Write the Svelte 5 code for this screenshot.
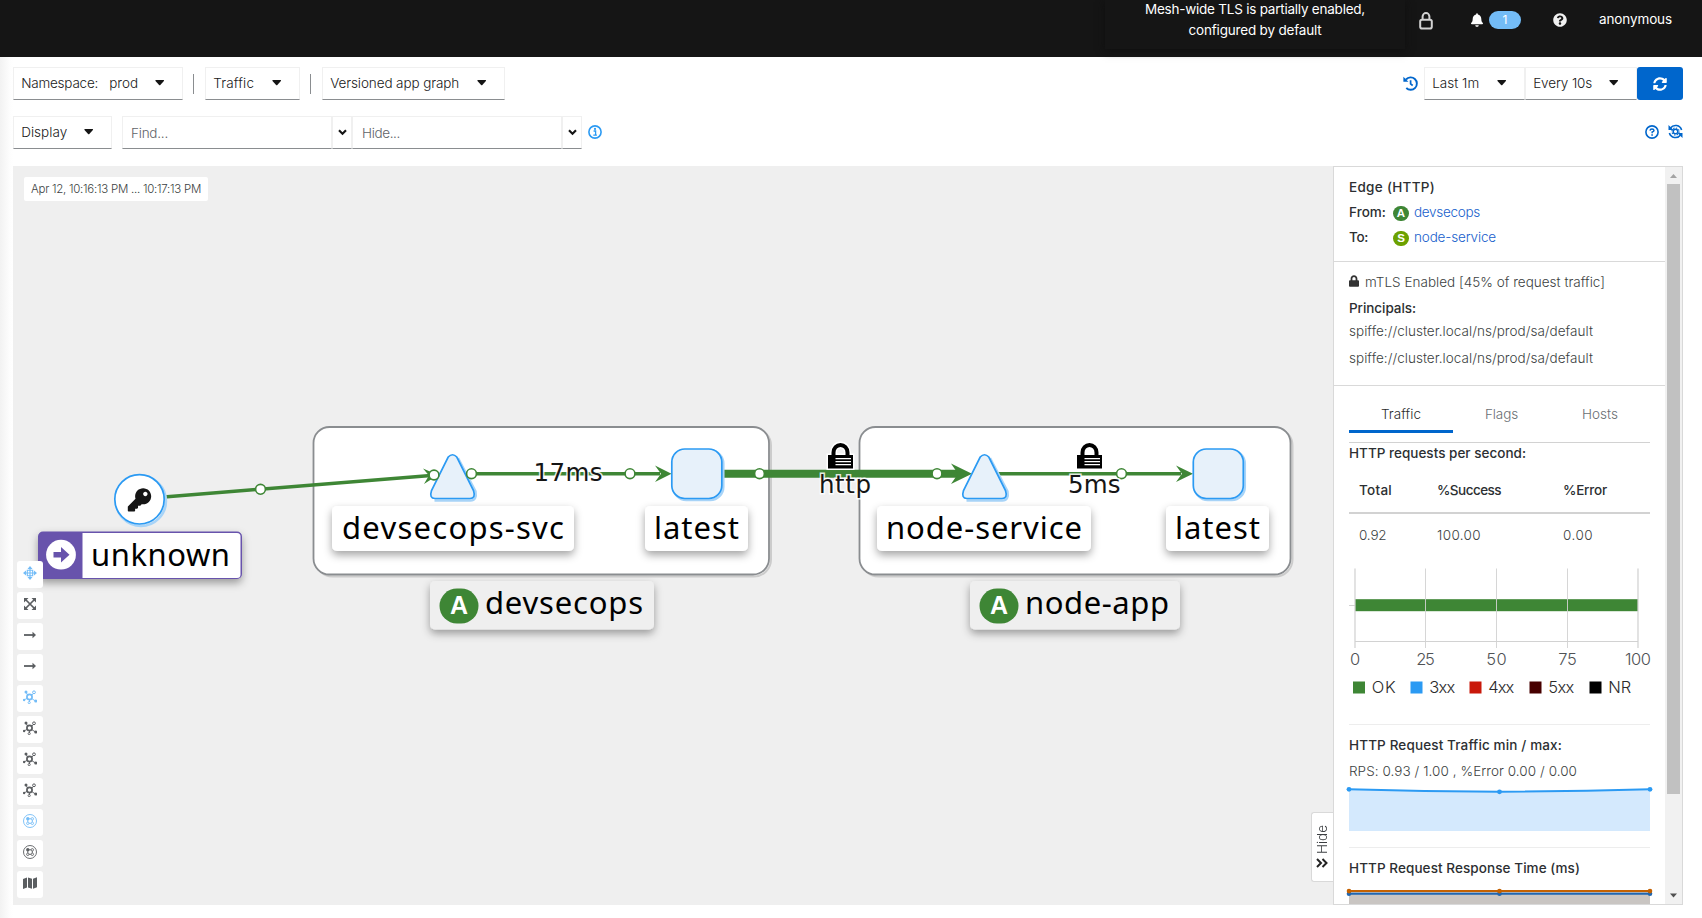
<script>
  const ICONS = {
    key: 'M512 176.001C512 273.203 433.202 352 336 352c-11.22 0-22.19-1.062-32.827-3.069l-24.012 27.014A23.999 23.999 0 0 1 261.223 384H224v40c0 13.255-10.745 24-24 24h-40v40c0 13.255-10.745 24-24 24H24c-13.255 0-24-10.745-24-24v-78.059c0-6.365 2.529-12.47 7.029-16.971l161.802-161.802C163.108 213.814 160 195.271 160 176 160 78.798 238.797.001 335.999 0 433.488-.001 512 78.511 512 176.001zM336 128c0 26.51 21.49 48 48 48s48-21.49 48-48-21.49-48-48-48-48 21.49-48 48z',
    lock: 'M400 224h-24v-72C376 68.2 307.8 0 224 0S72 68.2 72 152v72H48c-26.5 0-48 21.5-48 48v192c0 26.5 21.5 48 48 48h352c26.5 0 48-21.5 48-48V272c0-26.5-21.5-48-48-48zm-104 0H152v-72c0-39.7 32.3-72 72-72s72 32.3 72 72v72z',
    bell: 'M224 512c35.32 0 63.97-28.65 63.97-64H160.03c0 35.35 28.65 64 63.97 64zm215.39-149.71c-19.32-20.76-55.47-51.99-55.47-154.29 0-77.7-54.48-139.9-127.94-155.16V32c0-17.67-14.32-32-31.98-32s-31.98 14.33-31.98 32v20.84C118.56 68.1 64.08 130.3 64.08 208c0 102.3-36.15 133.53-55.47 154.29-6 6.45-8.66 14.16-8.61 21.71.11 16.4 12.98 32 32.1 32h383.8c19.12 0 32-15.6 32.1-32 .05-7.55-2.61-15.27-8.61-21.71z',
    question: 'M504 256c0 136.997-111.043 248-248 248S8 392.997 8 256C8 119.083 119.043 8 256 8s248 111.083 248 248zM262.655 90c-54.497 0-89.255 22.957-116.549 63.758-3.536 5.286-2.353 12.415 2.715 16.258l34.699 26.31c5.205 3.947 12.621 3.008 16.665-2.122 17.864-22.658 30.113-35.797 57.303-35.797 20.429 0 45.698 13.148 45.698 32.958 0 14.976-12.363 22.667-32.534 33.976C247.128 238.528 216 254.941 216 296v4c0 6.627 5.373 12 12 12h56c6.627 0 12-5.373 12-12v-1.333c0-28.462 83.186-29.647 83.186-106.667 0-58.002-60.165-102-116.531-102zM256 338c-25.365 0-46 20.635-46 46 0 25.364 20.635 46 46 46s46-20.636 46-46c0-25.365-20.635-46-46-46z',
    sync: 'M370.72 133.28C339.458 104.008 298.888 87.962 255.848 88c-77.458.068-144.328 53.178-162.791 126.85-1.344 5.363-6.122 9.15-11.651 9.15H24.103c-7.498 0-13.194-6.807-11.807-14.176C33.933 94.924 134.813 8 256 8c66.448 0 126.791 26.136 171.315 68.685L463.03 40.97C478.149 25.851 504 36.559 504 57.941V192c0 13.255-10.745 24-24 24H345.941c-21.382 0-32.09-25.851-16.971-40.971l41.75-41.749zM32 296h134.059c21.382 0 32.09 25.851 16.971 40.971l-41.75 41.75c31.262 29.273 71.835 45.319 114.876 45.28 77.418-.07 144.315-53.144 162.787-126.849 1.344-5.363 6.122-9.15 11.651-9.15h57.304c7.498 0 13.194 6.807 11.807 14.176C478.067 417.076 377.187 504 256 504c-66.448 0-126.791-26.136-171.315-68.685L48.97 471.03C33.851 486.149 8 475.441 8 454.059V320c0-13.255 10.745-24 24-24z'
  };

  const tools = [
    ['move', true], ['fit', false], ['arrow', false], ['arrow', false],
    ['layout', true], ['layout', false], ['layout', false], ['layout', false],
    ['ns', true], ['ns', false], ['map', false]
  ];

  const legend = [
    ['OK', '#3e8635', 1353, 24], ['3xx', '#2b9af3', 1410.5, 26], ['4xx', '#c9190b', 1469.5, 26],
    ['5xx', '#470000', 1529.5, 26], ['NR', '#000', 1589.5, 23]
  ];
  const ticks = [[0, 1355, 10], [25, 1425.5, 18.5], [50, 1496.5, 20.5], [75, 1567.5, 18.5], [100, 1638, 26]];

  const groups = [{ x: 313.5, w: 455.5 }, { x: 859.5, w: 431 }];
  const triangles = [452.5, 984.5];
  const squares = [671.8, 1193.3];
  const labels = [
    { t: 'devsecops-svc', x: 332, w: 242, tw: 222 },
    { t: 'latest', x: 645, w: 103, tw: 85 },
    { t: 'node-service', x: 877, w: 214, tw: 196 },
    { t: 'latest', x: 1166, w: 103, tw: 85 }
  ];
  const apps = [
    { t: 'devsecops', x: 430, w: 224, tw: 158 },
    { t: 'node-app', x: 970, w: 210, tw: 144 }
  ];
  const dots = [[260.5, 489.3], [434, 475], [471.5, 473.7], [630, 473.7], [759.5, 473.7], [937, 473.7], [1121.5, 473.7]];

  // Spreads the letters of a label over a fixed measure.
  function measure(node, width) {
    const natural = node.getBoundingClientRect().width;
    node.style.letterSpacing = (width - natural) / node.textContent.length + 'px';
  }
</script>

{#snippet caret()}
  <svg class="caret" width="10" height="6" viewBox="0 0 10 6"><path d="M.8 0h7.800q.8.200.3.900L5.300 5q-.6.500-1.200 0L.5.900Q.1.200.8 0z" fill="#151515" /></svg>
{/snippet}

{#snippet chevron()}
  <svg width="9" height="7" viewBox="0 0 9 7"><path d="M1 1.200 4.500 4.800 8 1.200" fill="none" stroke="#151515" stroke-width="2.100" /></svg>
{/snippet}

{#snippet padlock(x)}
  <g transform="translate({x} 443)" stroke="#fff" stroke-width="4" paint-order="stroke">
    <path d="M0 12h3.500V9.500a9 9.500 0 0 1 18 0V12H25v13.500H0z M7.500 12h10V9.500a5 5.500 0 0 0-10 0z" fill="#000" fill-rule="evenodd" stroke-width="3" />
    <path d="M7.500 15.700H23M7.500 18.700H23M7.500 21.700H23" stroke="#fff" stroke-width="1.300" />
  </g>
{/snippet}

<div class="page">
  <header>
    <div class="tls">
      <span use:measure={220}>Mesh-wide TLS is partially enabled,</span>
      <span use:measure={133}>configured by default</span>
    </div>
    <svg class="h-lock" width="14" height="18" viewBox="0 0 14 18"><rect x="1.200" y="7.700" width="11.600" height="8.800" rx="1.800" fill="none" stroke="#d2d2d2" stroke-width="2" /><path d="M3.600 7V4.500a3.400 3.400 0 0 1 6.800 0V7" fill="none" stroke="#d2d2d2" stroke-width="2" /></svg>
    <svg class="h-bell" width="12" height="14" viewBox="0 0 448 512"><path d={ICONS.bell} fill="#fff" /></svg>
    <span class="count">1</span>
    <svg class="h-help" width="14" height="14" viewBox="0 0 512 512"><path d={ICONS.question} fill="#f0f0f0" /></svg>
    <span class="user"><span use:measure={73}>anonymous</span></span>
  </header>

  <div class="body">
    <div class="edge"></div>
    <main>
      <div class="bar">
        <button class="dd" style:width="170px"><span use:measure={77}>Namespace:</span><span class="prod" use:measure={29}>prod</span>{@render caret()}</button>
        <i class="sep"></i>
        <button class="dd" style:width="95px"><span use:measure={41}>Traffic</span>{@render caret()}</button>
        <i class="sep"></i>
        <button class="dd" style:width="183px"><span use:measure={129}>Versioned app graph</span>{@render caret()}</button>
        <span class="grow"></span>
        <svg class="hist" width="15" height="15" viewBox="0 0 15 15" fill="none" stroke="#06c"><path d="M3 3.500A6.200 6.200 0 1 1 3.300 12" stroke-width="1.900" /><path d="M.4.800v5h5z" fill="#06c" stroke="none" /><path d="M7.600 4.200v3.600l2.100 1.700" stroke-width="1.700" /></svg>
        <button class="dd" style:width="101px"><span use:measure={47}>Last 1m</span>{@render caret()}</button>
        <button class="dd" style:width="112px"><span use:measure={59}>Every 10s</span>{@render caret()}</button>
        <button class="refresh" aria-label="Refresh"><svg width="14" height="14" viewBox="0 0 512 512"><path d={ICONS.sync} fill="#fff" /></svg></button>
      </div>
      <div class="bar second">
        <button class="dd" style:width="99px"><span use:measure={46}>Display</span>{@render caret()}</button>
        <div class="field first"><span use:measure={37}>Find...</span></div>
        <div class="pick">{@render chevron()}</div>
        <div class="field hidef"><span use:measure={38}>Hide...</span></div>
        <div class="pick">{@render chevron()}</div>
        <svg class="info" width="14" height="14" viewBox="0 0 14 14"><circle cx="7" cy="7" r="6.100" fill="none" stroke="#2b9af3" stroke-width="1.600" /><path d="M5.600 6h2v4M5.300 10.200h3.600" fill="none" stroke="#2b9af3" stroke-width="1.300" /><circle cx="7" cy="3.900" r="1.100" fill="#2b9af3" /></svg>
        <span class="grow"></span>
        <svg class="up" width="14" height="14" viewBox="0 0 14 14" fill="none" stroke="#06c"><circle cx="7" cy="7" r="6.100" stroke-width="1.600" /><path d="M5 5.600Q5.200 4 7 4t2 1.500Q9 6.500 7.200 7v1.200" stroke-width="1.500" /><path d="M6.300 9.200h1.600v1.500H6.300z" fill="#06c" stroke="none" /></svg>
        <svg class="reset" width="15" height="15" viewBox="0 0 15 15" fill="none" stroke="#06c"><path d="M2.500 4A6.300 6.300 0 0 1 13.600 6M12.500 11A6.300 6.300 0 0 1 1.400 9" stroke-width="1.600" /><path d="M.5 1v5h5zM14.500 14V9h-5z" fill="#06c" stroke="none" /><circle cx="7.500" cy="7.500" r="2.300" stroke-width="1.500" /><circle cx="7.500" cy="7.500" r="3.600" stroke-width="1.100" stroke-dasharray="1.400 1.430" /></svg>
      </div>

      <div class="work">
        <div class="graph">
          <svg class="canvas" width="1320" height="739" viewBox="13 166 1320 739">
            <defs>
              <filter id="drop" x="-20%" y="-40%" width="140%" height="200%"><feDropShadow dx="0" dy="4" stdDeviation="4" flood-color="#000" flood-opacity=".36" /></filter>
            </defs>
            {#each groups as g}
              <rect x={g.x + 2} y="428.500" width={g.w} height="148" rx="17" fill="none" stroke="#ccc" stroke-width="2" />
              <rect x={g.x} y="427" width={g.w} height="147.500" rx="16" fill="#fff" stroke="#8a8d90" stroke-width="1.800" />
            {/each}

            <g stroke="#3e8635" fill="#3e8635">
              <path d="M164 497 434 475.200" stroke-width="3.500" />
              <path d="M471 473.800H660M996 473.800H1181" stroke-width="3.500" />
              <path d="M722 473.800H958" stroke-width="8" />
              <g stroke="none">
                <path d="M671.500 473.700 655 465.500 661 473.700 655 482z" />
                <path d="M1193 473.700 1176 465.500 1182 473.700 1176 482z" />
                <path d="M972 473.700 951 463.500 958 473.700 951 484z" />
                <path d="M438 475 423 468.500 429 475.600 424 484z" />
              </g>
            </g>

            <circle cx="141" cy="501" r="25" fill="none" stroke="#a8d4f8" stroke-width="2.500" />
            <circle cx="139.500" cy="499.300" r="24.700" fill="#fff" stroke="#2b9af3" stroke-width="1.700" />
            <path transform="translate(127.800 488.200) scale(.0457)" d={ICONS.key} fill="#151515" />

            {#each triangles as x}
              <g transform="translate({x} 0)">
                <path d="M5.500 458 23 491.500Q24.500 500.500 18 500.500H-18" fill="none" stroke="#a8d4f8" stroke-width="2.500" />
                <path d="M-4.300 457Q0 452.500 4.300 457L21 490.500Q23.500 498.500 17.500 498.500H-17.500Q-23.500 498.500 -21 490.500Z" fill="#e7f1fa" stroke="#2b9af3" stroke-width="1.700" />
              </g>
            {/each}
            {#each squares as x}
              <rect x={x + 1.500} y="450.500" width="50" height="49.500" rx="13" fill="none" stroke="#a8d4f8" stroke-width="2.500" />
              <rect {x} y="449" width="50" height="49.500" rx="13" fill="#e7f1fa" stroke="#2b9af3" stroke-width="1.700" />
            {/each}

            {#each labels as l}
              <rect x={l.x} y="506" width={l.w} height="45" rx="5" fill="#fff" filter="url(#drop)" />
              <text class="name" x={l.x + l.w / 2} y="538.500" text-anchor="middle" textLength={l.tw}>{l.t}</text>
            {/each}

            {#each apps as a}
              <rect x={a.x} y="581" width={a.w} height="48.500" rx="5" fill="#efefef" filter="url(#drop)" />
              <rect x={a.x + 9.500} y="588.500" width="39" height="35" rx="17.500" fill="#3e8635" />
              <text class="letter" x={a.x + 29} y="613.700" text-anchor="middle">A</text>
              <text class="name" x={a.x + 55} y="613.500" textLength={a.tw}>{a.t}</text>
            {/each}

            <g>
              <rect x="38" y="531.500" width="204" height="47.500" rx="5" fill="#6753ac" filter="url(#drop)" />
              <path d="M82.500 533H237q3.500 0 3.500 3.500v38q0 3.500-3.500 3.500H82.500z" fill="#fff" />
              <circle cx="61" cy="554.700" r="14.900" fill="#fff" />
              <path d="M53.500 552h7.500v-5l8.500 7.700-8.500 7.700v-5h-7.500z" fill="#6753ac" />
              <text class="name" x="91" y="565.500" textLength="139">unknown</text>
            </g>

            {#each dots as d}
              <circle cx={d[0]} cy={d[1]} r="4.900" fill="#fff" stroke="#3e8635" stroke-width="1.600" />
            {/each}
            <g class="metric">
              <text x="533.500" y="480.500" textLength="69">17ms</text>
              <text x="819" y="492.800" textLength="52">http</text>
              <text x="1068" y="492.800" textLength="52.500">5ms</text>
            </g>
            {@render padlock(828)}
            {@render padlock(1077)}
          </svg>

          <div class="time"><span use:measure={170}>Apr 12, 10:16:13 PM ... 10:17:13 PM</span></div>

          <div class="tools">
            {#each tools as [kind, on]}
              <div class="tool" class:on>
                <svg width="14" height="14" viewBox="0 0 14 14" fill="none" stroke="currentColor" stroke-width="1.200">
                  {#if kind === 'move'}
                    <path d="M7 0 9.500 3h-5zM7 14l2.500-3h-5zM0 7l3-2.500v5zM14 7l-3-2.500v5z" fill="currentColor" stroke="none" />
                    <path d="M4.300 4.300h5.400v5.400H4.300zM7 3v8M3 7h8" stroke-width="1.100" />
                  {:else if kind === 'fit'}
                    <path d="M2.500 2.500l9 9M11.500 2.500l-9 9" stroke-width="1.700" />
                    <path d="M1 1h4.500L1 5.500zM13 1v4.500L8.500 1zM1 13V8.500L5.500 13zM13 13H8.500L13 8.500z" fill="currentColor" stroke="none" />
                  {:else if kind === 'arrow'}
                    <path d="M1 7h9.500" stroke-width="1.800" /><path d="M9.500 3.800 13 7 9.500 10.200z" fill="currentColor" stroke="none" />
                  {:else if kind === 'layout'}
                    <circle cx="6.500" cy="7" r="2.600" stroke-width="1.700" />
                    <path d="M4.800 5.200 3 2.500M8.500 5.500l2-2.200M4.200 8.300 1 10M8.600 8.500l3.600 2.300M6.500 9.500V12" stroke-width=".9" />
                    <circle cx="11" cy="2.300" r="1.400" stroke-width="1" /><circle cx="6.200" cy="12.600" r="1.100" stroke-width=".9" />
                    <g fill="currentColor" stroke="none"><circle cx="3" cy="2" r="1.500" /><circle cx="1.100" cy="10" r="1.200" /><circle cx="12.700" cy="11" r="1.500" /></g>
                  {:else if kind === 'ns'}
                    <circle cx="7" cy="7" r="6.500" stroke-width=".9" />
                    <circle cx="4.800" cy="4.800" r="1.700" fill="currentColor" stroke="none" />
                    <g stroke-width=".9"><circle cx="9.300" cy="4.800" r="1.200" /><circle cx="4.800" cy="9.300" r="1.200" /><circle cx="9.300" cy="9.300" r="1.200" /><path d="M6 4.800h2M4.800 6v2M9.300 6v2M6 9.300h2" /></g>
                  {:else}
                    <path d="M0 3 4 1.500v10L0 13zM5 1.500l4 1.300v10L5 11.500zM10 2.800 14 1.300v10l-4 1.500z" fill="currentColor" stroke="none" />
                  {/if}
                </svg>
              </div>
            {/each}
          </div>

          <div class="hide"><svg width="12" height="10" viewBox="0 0 12 10"><path d="M1 1l4 4-4 4M6.500 1l4 4-4 4" fill="none" stroke="#222" stroke-width="2" /></svg><span>Hide</span></div>
        </div>

        <aside>
          <div class="content">
            <section class="who">
              <div class="strong title"><span use:measure={86}>Edge (HTTP)</span></div>
              <div class="end from"><b use:measure={37}>From:</b><i class="badge">A</i><a href="#a" use:measure={66}>devsecops</a></div>
              <div class="end"><b use:measure={19}>To:</b><i class="badge svc">S</i><a href="#s" use:measure={82}>node-service</a></div>
            </section>
            <section class="mtls">
              <div><svg width="10" height="12" viewBox="0 0 448 512"><path d={ICONS.lock} fill="#333" /></svg><span use:measure={240}>mTLS Enabled [45% of request traffic]</span></div>
              <div class="strong"><span use:measure={67}>Principals:</span></div>
              <div class="p1"><span use:measure={244}>spiffe://cluster.local/ns/prod/sa/default</span></div>
              <div class="p2"><span use:measure={244}>spiffe://cluster.local/ns/prod/sa/default</span></div>
            </section>
            <section class="stats">
              <nav><span class="on"><em use:measure={40}>Traffic</em></span><span><em use:measure={33}>Flags</em></span><span><em use:measure={36}>Hosts</em></span></nav>
              <hr />
              <div class="strong h1"><span use:measure={177}>HTTP requests per second:</span></div>
              <div class="row head"><span><em use:measure={33}>Total</em></span><span><em use:measure={64}>%Success</em></span><span><em use:measure={44}>%Error</em></span></div>
              <div class="row"><span><em use:measure={27.500}>0.92</em></span><span><em use:measure={44}>100.00</em></span><span><em use:measure={30}>0.00</em></span></div>
              <svg class="chart" width="316" height="168" viewBox="1349 556 316 168">
                <path d="M1349 605.500h6" stroke="#d2d2d2" />
                <rect x="1355" y="599.200" width="283" height="12" fill="#3e8635" />
                <path d="M1355 641.500h283" stroke="#d2d2d2" />
                {#each ticks as [v, x, w], i}
                  <path d="M{x} 568.500V648" stroke="#d2d2d2" stroke-opacity={i % 4 ? .9 : .7} stroke-width={i % 4 ? 1 : 1.800} />
                  <text {x} y="665.300" text-anchor="middle" textLength={w} fill="#4f5255">{v}</text>
                {/each}
                {#each legend as [name, color, x, w]}
                  <rect {x} y="681.500" width="12" height="12" fill={color} />
                  <text x={x + 18.800} y="692.500" textLength={w} fill="#2b2b2b">{name}</text>
                {/each}
              </svg>
              <div class="strong block"><span use:measure={213}>HTTP Request Traffic min / max:</span></div>
              <div class="rps"><span use:measure={228}>RPS: 0.93 / 1.00 , %Error 0.00 / 0.00</span></div>
              <svg class="spark" width="307" height="63" viewBox="1346 784 307 63">
                <path d="M1349 789.300Q1499.500 794 1650 789.300V831H1349z" fill="#d4e9fd" />
                <path d="M1349 789.300Q1499.500 794 1650 789.300" fill="none" stroke="#2b9af3" stroke-width="2" />
                <g fill="#2b9af3"><circle cx="1349" cy="789.300" r="2.400" /><circle cx="1499.500" cy="791.800" r="2.400" /><circle cx="1650" cy="789.300" r="2.400" /></g>
              </svg>
              <div class="strong block"><span use:measure={231}>HTTP Request Response Time (ms)</span></div>
              <svg class="spark last" width="307" height="19" viewBox="1346 885 307 19">
                <path d="M1349 892h301v12h-301z" fill="#c9c5c2" />
                <path d="M1349 893.800h301" stroke="#2066b0" stroke-width="2" />
                <g fill="#2066b0"><circle cx="1349" cy="893.800" r="2.300" /><circle cx="1499.500" cy="893.800" r="2.300" /><circle cx="1650" cy="893.800" r="2.300" /></g>
                <path d="M1349 890.900h301" stroke="#c46100" stroke-width="2" />
                <g fill="#c46100"><circle cx="1349" cy="891.100" r="2.300" /><circle cx="1499.500" cy="891.100" r="2.300" /><circle cx="1650" cy="891.100" r="2.300" /></g>
              </svg>
            </section>
          </div>
          <div class="scroll">
            <svg width="17" height="17" viewBox="0 0 17 17"><path d="M5 11l3.500-4L12 11z" fill="#a3a3a3" /></svg>
            <div class="thumb"></div>
            <svg width="17" height="17" viewBox="0 0 17 17"><path d="M5 6.500h7L8.500 10.500z" fill="#505050" /></svg>
          </div>
        </aside>
      </div>
    </main>
  </div>
</div>

<style>
  :global(body) { margin: 0; background: #fff; overflow: hidden; }
  .page { width: 1702px; height: 918px; overflow: hidden; font: 300 13.5px/20px Inter, sans-serif; color: #3c3f42; white-space: nowrap; display: flex; flex-direction: column; }
  .page * { box-sizing: border-box; }
  svg { display: block; flex: none; }
  header { height: 57px; background: #151515; color: #fff; display: flex; align-items: flex-start; justify-content: flex-end; flex: none; font-weight: 400; }
  .tls { width: 300px; height: 49px; box-shadow: 0 2px 8px #0f0f0f; display: flex; flex-direction: column; align-items: center; line-height: 21px; margin-right: 14px; }
  .tls span:first-child { margin-top: -1px; }
  .h-lock { margin-top: 12px; }
  .h-bell { margin: 13px 0 0 38px; }
  .count { width: 32px; height: 18px; margin: 11px 0 0 6px; border-radius: 9px; background: #73bcf7; text-align: center; line-height: 18px; font-size: 12px; }
  .h-help { margin: 13px 32px 0 32px; }
  .user { width: 103px; margin-top: 9px; }
  .body { display: flex; flex: 1; }
  .edge { width: 13px; background: linear-gradient(90deg, #f2f2f2, #fdfdfd 75%, #fff); }
  main { width: 1670px; display: flex; flex-direction: column; }
  .bar { display: flex; align-items: center; height: 33px; margin-top: 10px; flex: none; }
  .second { margin-top: 16px; }
  button { font: inherit; font-weight: 350; color: #202020; }
  .dd { height: 33px; padding: 0 17px 1px 7.200px; background: #fff; border: 1px solid #f0f0f0; border-bottom-color: #8a8d90; display: flex; align-items: center; text-align: left; flex: none; }
  .dd .prod { margin-left: 11px; }
  .caret { margin-left: auto; }
  .sep { width: 1px; height: 20px; background: #8a8d90; margin: 0 11px 0 10px; }
  .grow { flex: 1; }
  .hist { margin: 0 6px 1px 0; }
  .refresh { width: 46px; height: 33px; background: #06c; border: 0; border-radius: 3px; padding: 0; display: grid; place-items: center; }
  .field, .pick { height: 33px; border: 1px solid #f0f0f0; border-bottom-color: #8a8d90; display: flex; align-items: center; }
  .field { width: 210px; padding: 0 0 0 8px; color: #5f6368; font-weight: 350; }
  .hidef { padding-left: 9px; }
  .first { margin-left: 10px; }
  .pick { width: 20px; justify-content: center; padding-bottom: 1px; }
  .info { margin: 0 0 2px 6px; }
  .up { margin-bottom: 2px; }
  .reset { margin: 0 0 2px 9px; }
  .work { display: flex; height: 739px; margin-top: 17px; }
  .graph { width: 1320px; position: relative; background: #efefef; }
  .canvas { position: absolute; inset: 0; }
  .name { font: 400 31px "Noto Sans", sans-serif; fill: #000; }
  .letter { font: 700 25px "Liberation Sans", sans-serif; fill: #fff; }
  .metric { font: 400 24.500px "DejaVu Sans", sans-serif; fill: #151515; stroke: #fff; stroke-opacity: .85; stroke-width: 3px; paint-order: stroke; }
  .time { position: absolute; left: 11px; top: 11px; width: 184px; height: 24px; padding-left: 7px; border-radius: 2px; background: #fff; font-size: 11.500px; line-height: 24px; font-weight: 350; }
  .tools { position: absolute; left: 4px; top: 395px; display: flex; flex-direction: column; gap: 4px; }
  .tool { width: 26px; height: 27px; border-radius: 3px; background: #fff; display: grid; place-items: center; color: #5b5e61; padding-bottom: 3px; }
  .tool.on { color: #73bcf7; }
  .hide { position: absolute; left: 1298px; top: 646px; width: 22px; height: 70px; background: #fff; border: 1px solid #d9d9d9; border-right: 0; border-radius: 3px 0 0 3px; display: flex; flex-direction: column-reverse; align-items: center; gap: 4px; padding: 0 1px 13px 0; }
  .hide span { writing-mode: vertical-rl; transform: rotate(180deg); font-size: 13.500px; }
  aside { width: 350px; height: 739px; border: 1px solid #d9d9d9; background: #fff; display: flex; overflow: hidden; }
  .content { width: 331px; overflow: hidden; }
  section { padding: 0 15px; }
  section > div { display: flex; align-items: center; }
  b, .strong { font-weight: 500; color: #2c2f32; }
  em, i { font-style: normal; }
  .who { height: 95px; padding-top: 8px; border-bottom: 1px solid #d9d9d9; }
  .title { height: 24px; }
  .end { display: grid; grid-template-columns: 44px 21px auto; justify-content: start; justify-items: start; height: 24px; }
  .from { height: 26px; }
  .badge { width: 16px; height: 15px; border-radius: 8px; background: #3e8635; color: #fff; font: 700 11.500px/15px "Liberation Sans", sans-serif; text-align: center; position: relative; top: 1px; }
  .svc { background: #6ca100; }
  a { color: #1860cc; text-decoration: none; font-weight: 350; }
  .mtls { height: 124px; padding-top: 7px; border-bottom: 1px solid #d9d9d9; }
  .mtls > div { height: 26px; }
  .mtls svg { margin: -3px 6px 0 0; }
  .mtls > .p1 { height: 20px; }
  .mtls > .p2 { height: 33px; }
  nav { display: grid; grid-template-columns: 104px 97px 100px; height: 47px; }
  nav span { height: 47px; padding-top: 18px; text-align: center; color: #6a6e73; }
  nav .on { color: #2d2d2d; border-bottom: 3px solid #06c; font-weight: 350; }
  hr { height: 1px; border: 0; background: #d2d2d2; margin: 9px 0 0; }
  .h1 { height: 20px; }
  .stats .row { display: grid; grid-template-columns: 78px 126px 97px; height: 42px; padding-left: 10px; margin-right: -10px; }
  .stats .head { height: 51px; padding: 5px 0 0 10px; margin-right: 0; border-bottom: 2px solid #d2d2d2; grid-template-columns: 78px 126px 87px; font-weight: 500; color: #2c2f32; }
  .chart text { font: 300 16.500px Inter, sans-serif; }
  .block { border-top: 1px solid #ededed; height: 41px; }
  .rps { height: 19px; padding-bottom: 8px; }
  .rps span { margin-top: 1px; }
  .spark { margin-left: -3px; }
  .last { margin-top: -3px; }
  .scroll { width: 17px; background: #f1f1f1; display: flex; flex-direction: column; align-items: center; justify-content: flex-start; }
  .thumb { width: 13px; height: 610px; background: #c1c1c1; margin-bottom: auto; }
</style>
